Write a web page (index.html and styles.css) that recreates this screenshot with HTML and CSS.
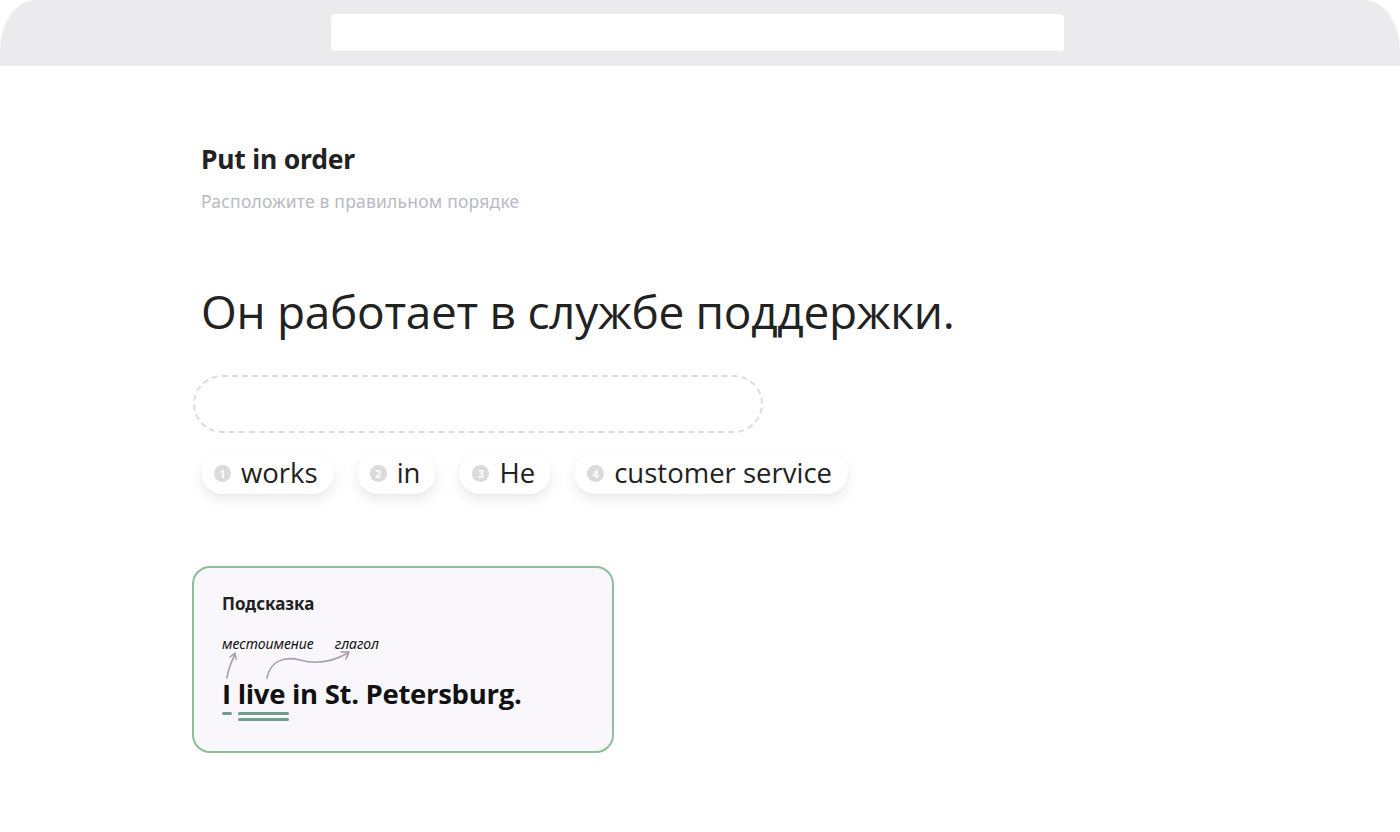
FILE: index.html
```html
<!DOCTYPE html>
<html lang="ru">
<head>
<meta charset="utf-8">
<title>Put in order</title>
<link rel="stylesheet" href="styles.css">
</head>
<body>
<div class="browser-bar">
  <div class="address"></div>
</div>
<main class="page">
  <h1 class="title">Put in order</h1>
  <p class="subtitle">Расположите в правильном порядке</p>
  <p class="sentence">Он работает в службе поддержки.</p>
  <div class="dropzone"></div>
  <div class="chips">
    <div class="chip"><span class="num">1</span><span class="word">works</span></div>
    <div class="chip"><span class="num">2</span><span class="word">in</span></div>
    <div class="chip"><span class="num">3</span><span class="word">He</span></div>
    <div class="chip"><span class="num">4</span><span class="word">customer service</span></div>
  </div>
  <section class="hint">
    <h2 class="hint-title">Подсказка</h2>
    <div class="example">
      <div class="labels">
        <span class="label">местоимение</span>
        <span class="label">глагол</span>
      </div>
      <svg class="arrows" width="200" height="50" viewBox="0 0 200 50">
        <g fill="none" stroke="#a39fb4" stroke-width="1.6" stroke-linecap="round" stroke-linejoin="round">
          <path d="M5 39 C6 30 9 24 13 15"/>
          <path d="M8 18 L13 14 L14 20"/>
          <path d="M45 39 C48 22 62 17 78 21 C95 26 110 23 126 14"/>
          <path d="M119 13 L127 13 L124 20"/>
        </g>
      </svg>
      <p class="ex-sentence"><span class="u-single">I</span> <span class="u-double">live</span> in St. Petersburg.</p>
    </div>
  </section>
</main>
</body>
</html>
```
FILE: styles.css
```css
* { box-sizing: border-box; }
html, body { margin: 0; padding: 0; background: #fff; }
body { font-family: "Open Sans", "Noto Sans", sans-serif; color: #222; }

.browser-bar {
  height: 66px;
  background: #ebebed;
  border-radius: 36px 36px 0 0 / 50px 50px 0 0;
  padding-top: 14px;
  padding-left: 331px;
}
.address {
  width: 733px;
  height: 37px;
  background: #fff;
  border-radius: 4px;
}

.page { padding-left: 201px; padding-top: 75px; }

.title {
  margin: 0;
  font-family: "Noto Sans", sans-serif;
  font-weight: 700;
  font-size: 26.5px;
  line-height: 36px;
  color: #222;
  letter-spacing: -0.2px;
}
.subtitle {
  margin: 12px 0 0;
  font-family: "Noto Sans", sans-serif;
  font-size: 17.5px;
  line-height: 24px;
  color: #b9b9c2;
  letter-spacing: 0.2px;
}
.sentence {
  margin: 67px 0 0;
  font-size: 46px;
  line-height: 62px;
  color: #222;
  letter-spacing: -0.3px;
}
.dropzone {
  margin: 33px 0 0 -8px;
  width: 570px;
  height: 58px;
  border: 2px dashed #dcdce0;
  border-radius: 29px;
}
.chips {
  display: flex;
  gap: 23px;
  margin-top: 19px;
}
.chip {
  display: flex;
  align-items: center;
  height: 42px;
  padding: 0 16px 0 13px;
  background: #fff;
  border-radius: 21px;
  box-shadow: 0 6px 14px rgba(0, 0, 0, 0.08), 0 1px 3px rgba(0, 0, 0, 0.04);
}
.num {
  width: 17px;
  height: 17px;
  border-radius: 50%;
  background: #d9d9de;
  color: #fff;
  font-size: 11px;
  font-weight: 700;
  line-height: 17px;
  text-align: center;
  margin-right: 10px;
}
.word {
  font-size: 27.5px;
  line-height: 34px;
  color: #222;
}

.hint {
  margin: 72px 0 0 -9px;
  width: 422px;
  height: 187px;
  border: 2px solid #8cbf98;
  border-radius: 18px;
  background: #f9f7fb;
  padding: 24px 28px 0;
}
.hint-title {
  margin: 0;
  font-family: "Noto Sans", sans-serif;
  font-weight: 700;
  font-size: 17px;
  line-height: 24px;
  color: #222;
}
.example { position: relative; margin-top: 19px; }
.labels {
  display: flex;
  gap: 21px;
  font-family: "Noto Sans", sans-serif;
  font-style: italic;
  font-size: 14px;
  line-height: 18px;
  color: #111;
}
.arrows { position: absolute; left: 0; top: 4px; }
.ex-sentence {
  margin: 23px 0 0;
  font-weight: 700;
  font-size: 27.5px;
  line-height: 36px;
  color: #111;
  letter-spacing: -0.3px;
}
.u-single, .u-double { position: relative; display: inline-block; }
.u-single::after {
  content: "";
  position: absolute;
  left: 0; right: -1px; bottom: -3px;
  height: 3px;
  border-radius: 2px;
  background: #6f9e8c;
}
.u-double::after {
  content: "";
  position: absolute;
  left: 0; right: -4px; bottom: -9px;
  height: 3px;
  border-radius: 2px;
  background: #6f9e8c;
  box-shadow: 0 -6px 0 #6f9e8c;
}
```
